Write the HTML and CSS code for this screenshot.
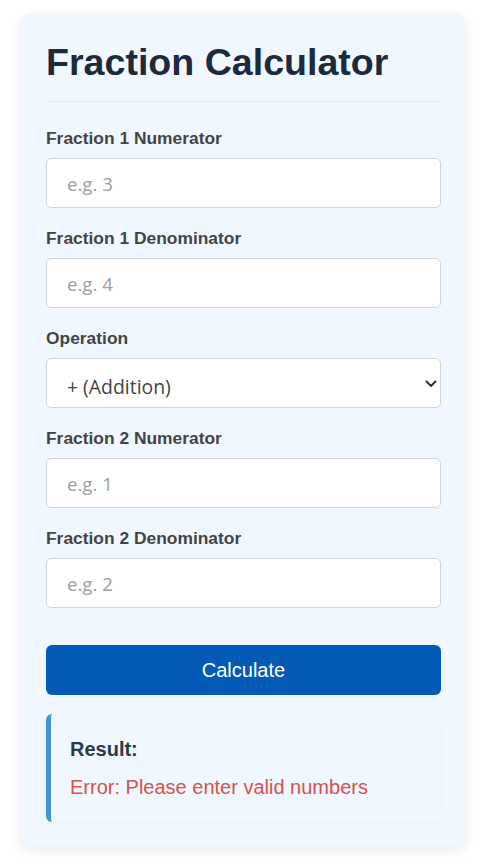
FILE: index.html
```html
<!DOCTYPE html>
<html lang="en">
<head>
<meta charset="utf-8">
<title>Fraction Calculator</title>
<link rel="stylesheet" href="styles.css">
</head>
<body>
<div class="card">
  <h1 class="title">Fraction Calculator</h1>
  <div class="group">
    <label class="label" for="n1">Fraction 1 Numerator</label>
    <input class="field" id="n1" type="text" placeholder="e.g. 3">
  </div>
  <div class="group">
    <label class="label" for="d1">Fraction 1 Denominator</label>
    <input class="field" id="d1" type="text" placeholder="e.g. 4">
  </div>
  <div class="group">
    <label class="label" for="op">Operation</label>
    <div class="select-wrap">
      <select class="field select" id="op">
        <option>+ (Addition)</option>
        <option>− (Subtraction)</option>
        <option>× (Multiplication)</option>
        <option>÷ (Division)</option>
      </select>
      <svg class="chevron" width="12" height="8" viewBox="0 0 12 8"><path d="M1.5 1.5 L6 6 L10.5 1.5" fill="none" stroke="#333" stroke-width="2" stroke-linecap="round" stroke-linejoin="round"/></svg>
    </div>
  </div>
  <div class="group">
    <label class="label" for="n2">Fraction 2 Numerator</label>
    <input class="field" id="n2" type="text" placeholder="e.g. 1">
  </div>
  <div class="group">
    <label class="label" for="d2">Fraction 2 Denominator</label>
    <input class="field" id="d2" type="text" placeholder="e.g. 2">
  </div>
  <button class="btn" type="button">Calculate</button>
  <div class="result">
    <div class="result-title">Result:</div>
    <div class="result-error">Error: Please enter valid numbers</div>
  </div>
</div>
</body>
</html>
```
FILE: styles.css
```css
html, body {
  margin: 0;
  padding: 0;
  background: #ffffff;
}
body {
  font-family: "Liberation Sans", Arial, sans-serif;
}
.card {
  margin: 13px 11px 13px 20px;
  background: #f0f7ff;
  border-radius: 12px;
  padding: 26px 25px 25px 26px;
  box-shadow: 0 4px 12px rgba(0, 0, 0, 0.08);
}
.title {
  margin: 0 0 26px 0;
  font-size: 37.6px;
  line-height: 47px;
  font-weight: bold;
  color: #1c2a3c;
  padding-bottom: 15px;
  border-bottom: 1px solid #e1e9f1;
}
.group {
  margin-bottom: 20px;
}
.label {
  display: block;
  font-size: 17.4px;
  line-height: 20px;
  font-weight: bold;
  color: #444444;
  margin-bottom: 10px;
}
.field {
  display: block;
  box-sizing: border-box;
  width: 100%;
  height: 50px;
  margin: 0;
  padding: 0 20px;
  border: 1px solid #d0d5da;
  border-radius: 5px;
  background: #ffffff;
  font-family: "Open Sans", "Noto Sans", sans-serif;
  font-size: 18.6px;
  color: #333333;
  outline: none;
}
.field::placeholder {
  color: #9aa0a6;
}
.select-wrap {
  position: relative;
}
.select {
  appearance: none;
  -webkit-appearance: none;
  padding-top: 6px;
  font-size: 19.4px;
  color: #444444;
}
.chevron {
  position: absolute;
  right: 4px;
  top: 22px;
  pointer-events: none;
}
.btn {
  display: block;
  width: 100%;
  height: 50px;
  margin: 37px 0 0 0;
  border: none;
  border-radius: 6px;
  background: #035bb6;
  color: #ffffff;
  font-family: "Liberation Sans", Arial, sans-serif;
  font-size: 20px;
}
.result {
  margin-top: 19px;
  background: #f0f7ff;
  border-left: 5px solid #3f97d2;
  border-radius: 6px;
  padding: 24px 20px 23px 19px;
  box-shadow: 0 1px 4px rgba(0, 0, 0, 0.03);
}
.result-title {
  font-size: 20px;
  line-height: 23px;
  font-weight: bold;
  color: #2c3a47;
}
.result-error {
  margin-top: 15px;
  font-size: 20px;
  line-height: 23px;
  color: #d6524a;
}
```
